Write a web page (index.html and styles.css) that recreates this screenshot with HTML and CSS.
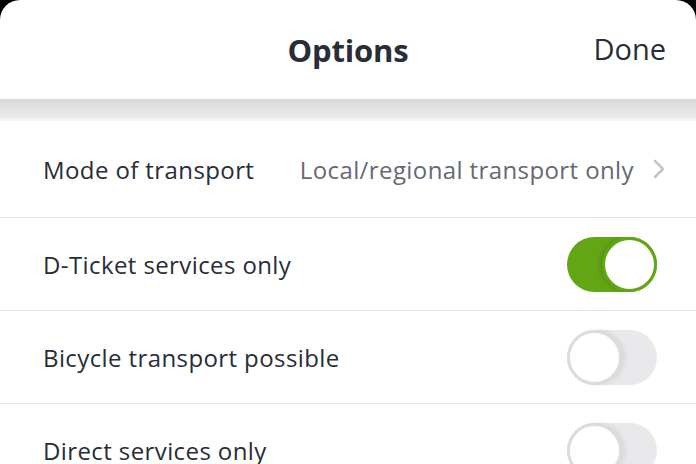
FILE: index.html
```html
<!DOCTYPE html>
<html lang="en">
<head>
  <meta charset="UTF-8">
  <meta name="viewport" content="width=device-width, initial-scale=1.0">
  <title>Options</title>
  <link rel="stylesheet" href="styles.css">
</head>
<body>
  <div class="sheet">
    <header class="sheet-header">
      <h1>Options</h1>
      <button class="done">Done</button>
    </header>

    <div class="gap"></div>

    <ul class="options">
      <li class="row row-link">
        <span class="label">Mode of transport</span>
        <span class="value">Local/regional transport only</span>
        <svg class="chevron" width="14" height="22" viewBox="0 0 14 22">
          <path d="M3 3 L11 11 L3 19" fill="none" stroke="#c4c5c8" stroke-width="2.6" stroke-linecap="round" stroke-linejoin="round"/>
        </svg>
      </li>
      <li class="row">
        <span class="label">D-Ticket services only</span>
        <span class="toggle on"></span>
      </li>
      <li class="row">
        <span class="label">Bicycle transport possible</span>
        <span class="toggle"></span>
      </li>
      <li class="row">
        <span class="label">Direct services only</span>
        <span class="toggle"></span>
      </li>
    </ul>
  </div>
</body>
</html>
```

FILE: styles.css
```css
html, body {
  margin: 0;
  padding: 0;
  background-color: black;
}
body {
  font-family: "Open Sans", "Noto Sans", sans-serif;
  color: #282d37;
  height: 464px;
  overflow: hidden;
}
.sheet {
  background-color: white;
  border-radius: 20px 20px 0 0;
  height: 464px;
  overflow: hidden;
}
.sheet-header {
  height: 99px;
  display: flex;
  align-items: center;
  justify-content: center;
  position: relative;
}
.sheet-header h1 {
  margin: 0;
  font-size: 31px;
  font-weight: 700;
  letter-spacing: -0.2px;
}
.done {
  position: absolute;
  right: 30px;
  top: 29px;
  background: none;
  border: none;
  padding: 0;
  font-family: inherit;
  font-size: 29px;
  color: #282d37;
}
.gap {
  height: 20px;
  background: linear-gradient(to bottom, #d6d8da, #e4e6e7 70%, #eaeced);
  border-bottom: 2px solid #f3f4f5;
}
.options {
  list-style: none;
  margin: 0;
  padding: 0;
}
.row {
  display: flex;
  align-items: center;
  height: 92px;
  padding: 0 39px 0 43px;
  border-bottom: 1px solid #e6e7e9;
  font-size: 24px;
  letter-spacing: 0.4px;
}
.row-link {
  height: 96px;
  padding-right: 30px;
}
.label {
  flex: 1;
}
.value {
  color: #646973;
  margin-right: 18px;
}
.chevron {
  display: block;
}
.toggle {
  width: 90px;
  height: 55px;
  border-radius: 28px;
  background-color: #e9e9eb;
  position: relative;
  flex-shrink: 0;
}
.toggle::after {
  content: "";
  position: absolute;
  left: 0;
  top: 0;
  width: 49px;
  height: 49px;
  border-radius: 50%;
  background-color: white;
  border: 3px solid #dcdcde;
  box-shadow: 3px 0 4px rgba(0, 0, 0, 0.08);
}
.toggle.on {
  background-color: #63a615;
}
.toggle.on::after {
  left: auto;
  right: 0;
  border-color: #63a615;
  box-shadow: -3px 0 4px rgba(0, 0, 0, 0.1);
}
```
